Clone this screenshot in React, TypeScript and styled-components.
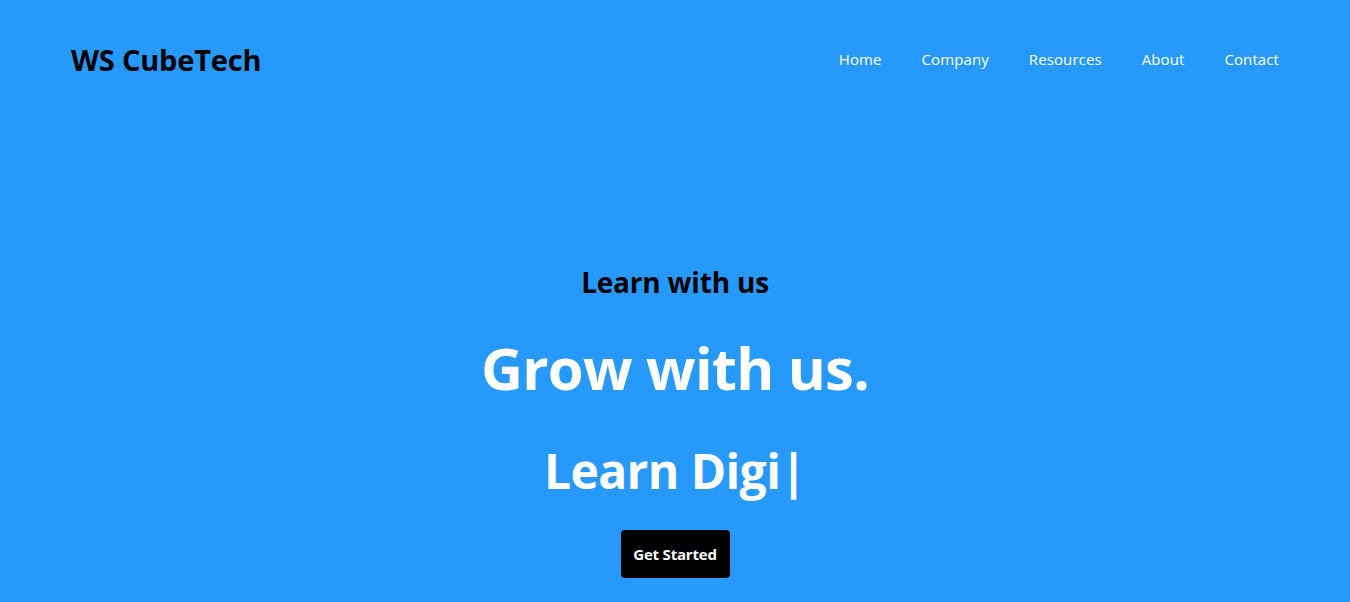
import React from "react";
import styled, { createGlobalStyle } from "styled-components";

const GlobalStyle = createGlobalStyle`
  html, body {
    margin: 0;
    padding: 0;
    background: #2799fb;
    font-family: "Open Sans", "Noto Sans", sans-serif;
  }
`;

const Page = styled.div({
  minHeight: "602px",
  background: "#2799fb",
  display: "flex",
  flexDirection: "column",
});

const Header = styled.header({
  display: "flex",
  alignItems: "center",
  justifyContent: "space-between",
  padding: "39px 71px 0 71px",
  height: "40px",
});

const Logo = styled.h1({
  margin: 0,
  fontSize: "29px",
  fontWeight: 700,
  color: "#000",
  letterSpacing: "-0.2px",
});

const NavList = styled.nav({
  display: "flex",
  gap: "40px",
});

const NavLink = styled.a({
  color: "#fff",
  fontSize: "15px",
  textDecoration: "none",
  letterSpacing: "0.1px",
});

const Hero = styled.section({
  display: "flex",
  flexDirection: "column",
  alignItems: "center",
  paddingTop: "183px",
});

const Eyebrow = styled.h3({
  margin: 0,
  fontSize: "28px",
  fontWeight: 700,
  color: "#000",
  lineHeight: "40px",
  letterSpacing: "-0.2px",
});

const Title = styled.h1({
  margin: "26px 0 0 0",
  fontSize: "58px",
  fontWeight: 700,
  color: "#fff",
  lineHeight: "80px",
  letterSpacing: "-0.8px",
});

const Typed = styled.h2({
  margin: "33px 0 0 0",
  fontSize: "48px",
  fontWeight: 700,
  color: "#fff",
  lineHeight: "60px",
  letterSpacing: "-0.6px",
});

const StartButton = styled.button({
  marginTop: "29px",
  width: "109px",
  height: "48px",
  border: "none",
  borderRadius: "4px",
  background: "#000",
  color: "#fff",
  fontFamily: "inherit",
  fontSize: "15px",
  fontWeight: 700,
  letterSpacing: "-0.2px",
  cursor: "pointer",
});

const links = ["Home", "Company", "Resources", "About", "Contact"];

export default function App() {
  return (
    <Page>
      <GlobalStyle />
      <Header>
        <Logo>WS CubeTech</Logo>
        <NavList>
          {links.map((l) => (
            <NavLink key={l} href="#">
              {l}
            </NavLink>
          ))}
        </NavList>
      </Header>
      <Hero>
        <Eyebrow>Learn with us</Eyebrow>
        <Title>Grow with us.</Title>
        <Typed>Learn Digi|</Typed>
        <StartButton>Get Started</StartButton>
      </Hero>
    </Page>
  );
}
